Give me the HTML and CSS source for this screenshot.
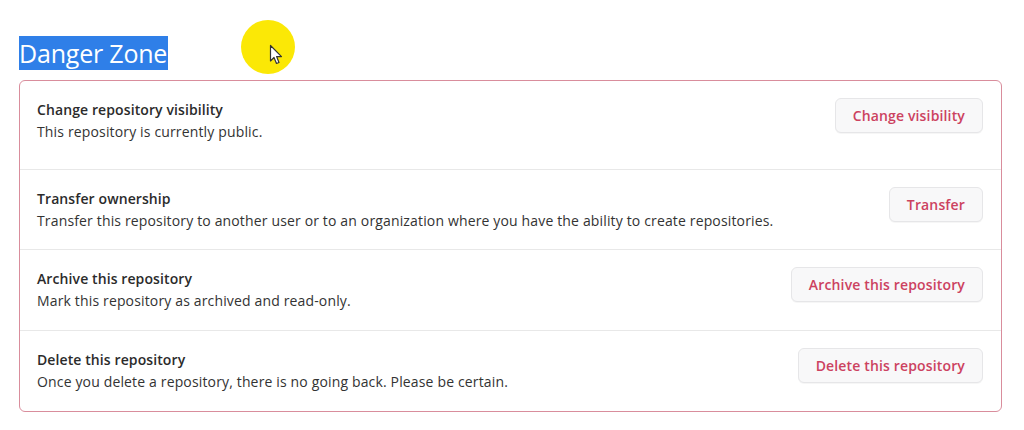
FILE: index.html
```html
<!DOCTYPE html>
<html lang="en">
<head>
<meta charset="utf-8">
<title>Danger Zone</title>
<link rel="stylesheet" href="styles.css">
</head>
<body>
<div class="page">
  <div class="heading-row">
    <h2 class="heading"><span class="sel">Danger Zone</span></h2>
  </div>
  <div class="pointer">
    <svg class="cursor" width="16" height="22" viewBox="0 0 16 22"><path d="M1.5 1.5 L1.5 17 L5 13.5 L7.5 19.5 L10 18.5 L7.6 12.6 L12.5 12.6 Z" fill="#fff" stroke="#333" stroke-width="1.2" stroke-linejoin="round"/></svg>
  </div>
  <div class="box">
    <div class="row first">
      <div class="info">
        <div class="title">Change repository visibility</div>
        <div class="desc">This repository is currently public.</div>
      </div>
      <button class="btn">Change visibility</button>
    </div>
    <div class="row">
      <div class="info">
        <div class="title">Transfer ownership</div>
        <div class="desc">Transfer this repository to another user or to an organization where you have the ability to create repositories.</div>
      </div>
      <button class="btn">Transfer</button>
    </div>
    <div class="row tall">
      <div class="info">
        <div class="title">Archive this repository</div>
        <div class="desc">Mark this repository as archived and read-only.</div>
      </div>
      <button class="btn">Archive this repository</button>
    </div>
    <div class="row tall">
      <div class="info">
        <div class="title">Delete this repository</div>
        <div class="desc">Once you delete a repository, there is no going back. Please be certain.</div>
      </div>
      <button class="btn">Delete this repository</button>
    </div>
  </div>
</div>
</body>
</html>
```
FILE: styles.css
```css
html, body {
  margin: 0;
  padding: 0;
  background: #fff;
}
body {
  font-family: "Open Sans", "Noto Sans", "Liberation Sans", sans-serif;
  color: #24292f;
}
.page {
  position: relative;
  padding: 37px 22px 0 19px;
}
.heading-row {
  height: 43px;
}
.heading {
  margin: 0;
  font-size: 25px;
  font-weight: 400;
  line-height: 33px;
  letter-spacing: -0.2px;
}
.sel {
  background: #2f7fe8;
  color: #fff;
  padding: 0 1px 0 0;
}
.pointer {
  position: absolute;
  left: 241px;
  top: 20px;
  width: 54px;
  height: 54px;
  border-radius: 50%;
  background: #fbe806;
}
.cursor {
  position: absolute;
  left: 28px;
  top: 24px;
}
.box {
  border: 1px solid #d98d9c;
  border-radius: 6px;
}
.row {
  display: flex;
  align-items: flex-start;
  justify-content: space-between;
  height: 80px;
  box-sizing: border-box;
  padding: 18px 18px 0 17px;
  border-top: 1px solid #e8e8e8;
}
.row.tall {
  height: 81px;
}
.row.first {
  border-top: none;
  height: 88px;
}
.title {
  font-size: 14px;
  font-weight: 600;
  line-height: 22px;
  color: #2b2b2b;
  letter-spacing: 0.1px;
}
.desc {
  font-size: 14px;
  line-height: 22px;
  color: #333;
  letter-spacing: 0.15px;
}
.btn {
  font-family: inherit;
  font-size: 14px;
  font-weight: 600;
  letter-spacing: 0.15px;
  color: #cc4260;
  background: #f8f8f9;
  border: 1px solid #e6e6e8;
  border-radius: 6px;
  height: 35px;
  margin-top: -1px;
  padding: 0 17px;
  box-shadow: 0 1px 0 rgba(27,31,36,0.04);
  flex-shrink: 0;
}
```
